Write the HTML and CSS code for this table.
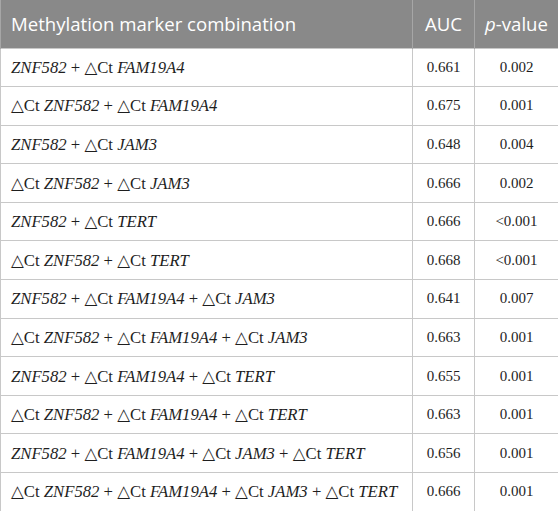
FILE: index.html
```html
<!DOCTYPE html>
<html>
<head>
<meta charset="utf-8">
<link rel="stylesheet" href="styles.css">
</head>
<body>
<table class="tbl">
  <colgroup>
    <col class="c1"><col class="c2"><col class="c3">
  </colgroup>
  <thead>
    <tr><th class="left">Methylation marker combination</th><th>AUC</th><th><i>p</i>-value</th></tr>
  </thead>
  <tbody>
    <tr><td class="left"><i>ZNF582</i> + △Ct <i>FAM19A4</i></td><td>0.661</td><td>0.002</td></tr>
    <tr><td class="left">△Ct <i>ZNF582</i> + △Ct <i>FAM19A4</i></td><td>0.675</td><td>0.001</td></tr>
    <tr><td class="left"><i>ZNF582</i> + △Ct <i>JAM3</i></td><td>0.648</td><td>0.004</td></tr>
    <tr><td class="left">△Ct <i>ZNF582</i> + △Ct <i>JAM3</i></td><td>0.666</td><td>0.002</td></tr>
    <tr><td class="left"><i>ZNF582</i> + △Ct <i>TERT</i></td><td>0.666</td><td>&lt;0.001</td></tr>
    <tr><td class="left">△Ct <i>ZNF582</i> + △Ct <i>TERT</i></td><td>0.668</td><td>&lt;0.001</td></tr>
    <tr><td class="left"><i>ZNF582</i> + △Ct <i>FAM19A4</i> + △Ct <i>JAM3</i></td><td>0.641</td><td>0.007</td></tr>
    <tr><td class="left">△Ct <i>ZNF582</i> + △Ct <i>FAM19A4</i> + △Ct <i>JAM3</i></td><td>0.663</td><td>0.001</td></tr>
    <tr><td class="left"><i>ZNF582</i> + △Ct <i>FAM19A4</i> + △Ct <i>TERT</i></td><td>0.655</td><td>0.001</td></tr>
    <tr><td class="left">△Ct <i>ZNF582</i> + △Ct <i>FAM19A4</i> + △Ct <i>TERT</i></td><td>0.663</td><td>0.001</td></tr>
    <tr><td class="left"><i>ZNF582</i> + △Ct <i>FAM19A4</i> + △Ct <i>JAM3</i> + △Ct <i>TERT</i></td><td>0.656</td><td>0.001</td></tr>
    <tr><td class="left">△Ct <i>ZNF582</i> + △Ct <i>FAM19A4</i> + △Ct <i>JAM3</i> + △Ct <i>TERT</i></td><td>0.666</td><td>0.001</td></tr>
  </tbody>
</table>
</body>
</html>
```
FILE: styles.css
```css
html, body {
  margin: 0;
  padding: 0;
  background: #ffffff;
}
.tbl {
  width: 558px;
  border-collapse: collapse;
  table-layout: fixed;
}
.c1 { width: 412px; }
.c2 { width: 62px; }
.c3 { width: 84px; }
.tbl th {
  height: 48px;
  padding: 0 4px;
  background: #898989;
  color: #ffffff;
  font-family: "Open Sans", "Noto Sans", sans-serif;
  font-weight: 400;
  font-size: 18.6px;
  text-align: center;
  border-left: 1px solid #a6a6a6;
  border-right: 1px solid #a6a6a6;
  box-sizing: border-box;
}
.tbl td {
  height: 38.6px;
  padding: 0 4px;
  font-family: "Liberation Serif", "DejaVu Serif", serif;
  font-size: 15px;
  color: #1e1e1e;
  text-align: center;
  border: 1px solid #c8c8c8;
  box-sizing: border-box;
}
.tbl td.left {
  font-size: 16.7px;
}
.tbl .left {
  text-align: left;
  padding-left: 10px;
}
```
